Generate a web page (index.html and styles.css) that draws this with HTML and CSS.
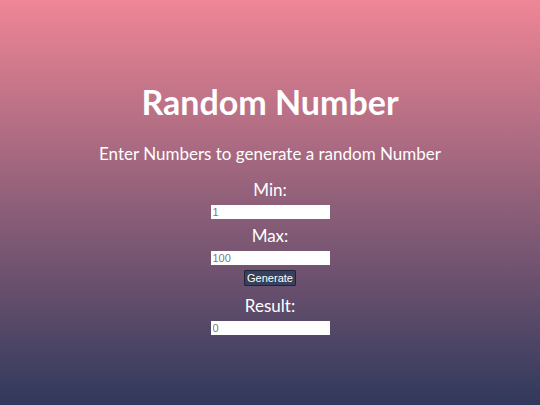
FILE: index.html
```html
<!DOCTYPE html>
<html>
<head>
<meta charset="utf-8">
<link rel="stylesheet" href="styles.css">
</head>
<body>
<main class="app">
  <h1 class="title">Random Number</h1>
  <p class="subtitle">Enter Numbers to generate a random Number</p>
  <label class="label label-min">Min:</label>
  <input class="field" type="text" value="1">
  <label class="label label-max">Max:</label>
  <input class="field" type="text" value="100">
  <button class="btn">Generate</button>
  <label class="label label-result">Result:</label>
  <input class="field" type="text" value="0">
</main>
</body>
</html>
```
FILE: styles.css
```css
html, body {
  margin: 0;
  padding: 0;
}
body {
  width: 540px;
  height: 405px;
  background: linear-gradient(to bottom, #ef8696 0%, #30395c 100%);
  font-family: Lato, "Open Sans", sans-serif;
  color: #ffffff;
  overflow: hidden;
}
.app {
  display: flex;
  flex-direction: column;
  align-items: center;
  padding-top: 82px;
}
.title {
  margin: 0;
  font-size: 34px;
  line-height: 40px;
  font-weight: 700;
}
.subtitle {
  margin: 21px 0 0;
  font-size: 17px;
  line-height: 22px;
}
.label {
  font-size: 17px;
  line-height: 22px;
}
.label-min { margin-top: 14px; }
.label-max { margin-top: 6px; }
.label-result { margin-top: 9px; }
.field {
  box-sizing: border-box;
  width: 119px;
  height: 14px;
  margin: 4px 0 0;
  padding: 0 2px;
  border: none;
  background: #ffffff;
  font-family: "Liberation Sans", Arial, sans-serif;
  font-size: 11px;
  color: #7a7a7a;
  outline: none;
}
.btn {
  margin-top: 5px;
  height: 16px;
  padding: 0 2px;
  background: #37405c;
  border: 1px solid #1f2436;
  border-radius: 1px;
  color: #ffffff;
  font-family: "Liberation Sans", Arial, sans-serif;
  font-size: 11px;
  line-height: 13px;
}
```
